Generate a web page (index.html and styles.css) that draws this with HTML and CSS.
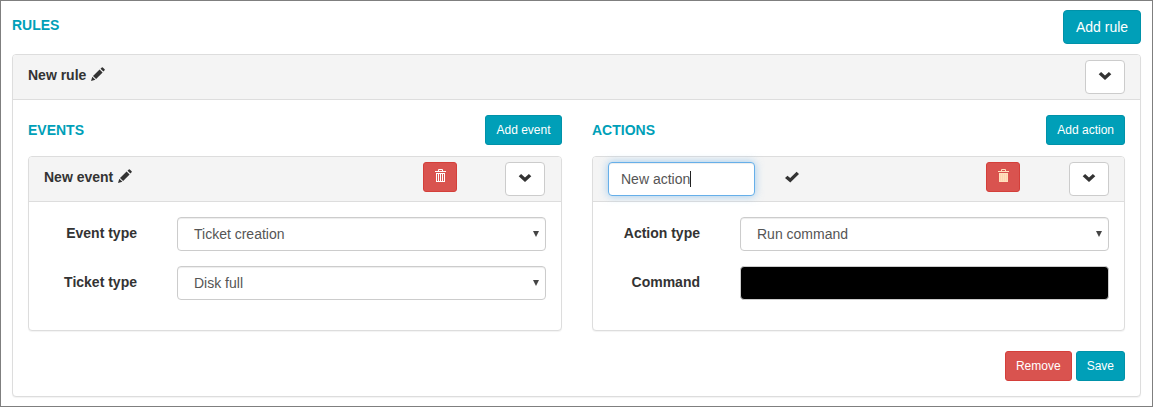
FILE: index.html
```
<!DOCTYPE html>
<html lang="en">
<head>
<meta charset="utf-8">
<title>Rules</title>
<link rel="stylesheet" href="styles.css">
</head>
<body>
<svg class="defs" width="0" height="0">
  <symbol id="pencil" viewBox="0 0 14 14"><path d="M0 14 1.3 9.7 4.4 12.7ZM2 9 8.6 2.6 11.6 5.4 5.1 12ZM9.5 1.8 10.8.5Q11.3 0 11.8.5L13.6 2.3Q14.1 2.8 13.6 3.3L12.4 4.6Z"/></symbol>
  <symbol id="chevron" viewBox="0 0 14 9"><path d="M.7 3.3 3.1.9 7 4.5 10.9.9 13.3 3.3 7 9Z"/></symbol>
  <symbol id="check" viewBox="0 0 14 12"><path d="M0 7.1 2.5 4.7 5.2 7.1 11.6.7 14 2.9 5.3 11.6Z"/></symbol>
  <symbol id="trash" viewBox="0 0 12 14"><path fill-rule="evenodd" d="M0 2H3V1Q3 0 4 0H7Q8 0 8 1V2H11V3H0ZM4 1V2H7V1ZM1 4H10V13H1ZM2 5V12H3V5ZM4 5V12H5V5ZM6 5V12H7V5ZM8 5V12H9V5Z"/></symbol>
</svg>
<main class="page">
  <header class="bar bar-page">
    <h1 class="title">RULES</h1>
    <button class="btn btn-primary btn-large">Add rule</button>
  </header>
  <section class="panel rule">
    <div class="panel-head">
      <span class="name">New rule <svg class="pencil"><use href="#pencil"/></svg></span>
      <button class="btn btn-toggle"><svg class="chevron"><use href="#chevron"/></svg></button>
    </div>
    <div class="rule-body">
      <div class="columns">
        <section class="events">
          <div class="bar">
            <h2 class="title">EVENTS</h2>
            <button class="btn btn-primary btn-event">Add event</button>
          </div>
          <div class="panel card">
            <div class="panel-head">
              <span class="name">New event <svg class="pencil"><use href="#pencil"/></svg></span>
              <button class="btn btn-danger btn-icon"><svg class="trash"><use href="#trash"/></svg></button>
              <button class="btn btn-toggle"><svg class="chevron"><use href="#chevron"/></svg></button>
            </div>
            <div class="form">
              <span class="label">Event type</span>
              <div class="control">Ticket creation<i class="arrow"></i></div>
              <span class="label">Ticket type</span>
              <div class="control">Disk full<i class="arrow"></i></div>
            </div>
          </div>
        </section>
        <section>
          <div class="bar">
            <h2 class="title">ACTIONS</h2>
            <button class="btn btn-primary">Add action</button>
          </div>
          <div class="panel card">
            <div class="panel-head">
              <div class="name-input">New action<i class="caret"></i></div>
              <svg class="check"><use href="#check"/></svg>
              <button class="btn btn-danger btn-icon"><svg class="trash trash-pale"><use href="#trash"/></svg></button>
              <button class="btn btn-toggle"><svg class="chevron"><use href="#chevron"/></svg></button>
            </div>
            <div class="form">
              <span class="label">Action type</span>
              <div class="control">Run command<i class="arrow"></i></div>
              <span class="label">Command</span>
              <div class="control control-masked"></div>
            </div>
          </div>
        </section>
      </div>
      <div class="footer">
        <button class="btn btn-danger">Remove</button>
        <button class="btn btn-primary">Save</button>
      </div>
    </div>
  </section>
</main>
</body>
</html>
```
FILE: styles.css
```
* { box-sizing: border-box; }
body { margin: 0; }
.defs { display: block; }
svg { fill: currentColor; flex: none; }

.page {
  height: 407px;
  border: 1px solid #7f7f7f;
  padding: 9px 11px 0;
  background: #fff;
  color: #333;
  font: 14px/20px "Liberation Sans", Arial, sans-serif;
  overflow: hidden;
}

.bar { display: flex; justify-content: space-between; height: 30px; }
.bar-page { height: 34px; }
.title {
  margin: 5px 0 0;
  color: #009fb8;
  font-size: 14px;
  line-height: 20px;
  font-weight: bold;
}

.panel {
  border: 1px solid #ddd;
  border-radius: 4px;
  background: #fff;
  box-shadow: 0 1px 1px rgba(0, 0, 0, .05);
}
.panel-head {
  display: flex;
  align-items: flex-start;
  height: 45px;
  padding: 5px 15px 0;
  border-bottom: 1px solid #ddd;
  border-radius: 3px 3px 0 0;
  background: #f4f4f4;
}
.events .panel-head { padding-right: 16px; }
.name { margin: 5px auto 0 0; font-weight: bold; white-space: nowrap; }
.pencil { width: 14px; height: 14px; margin-left: .5px; vertical-align: -1px; }

.rule { height: 343px; margin-top: 10px; }
.rule-body { padding: 15px 15px 0; }
.columns { display: grid; grid-template-columns: 534px 533px; gap: 30px; }
.card { height: 175px; margin-top: 11px; }

.btn {
  display: block;
  height: 30px;
  padding: 0 10px;
  border: 1px solid;
  border-radius: 3px;
  font: 12px/18px "Liberation Sans", Arial, sans-serif;
  white-space: nowrap;
}
.btn-primary { background: #009fb8; border-color: #0092a9; color: #fff; }
.btn-large { width: 78px; height: 34px; padding: 0; border-radius: 4px; font-size: 14px; }
.btn-event { width: 77px; padding: 0; }
.btn-danger { background: #d9534f; border-color: #d43f3a; color: #fff; }
.btn-icon { width: 34px; margin-right: 49px; }
.events .btn-icon { margin-right: 48px; }
.btn-toggle {
  width: 40px;
  height: 34px;
  padding: 0;
  border-color: #ccc;
  border-radius: 4px;
  background: #fff;
  color: #333;
}
.chevron { display: block; width: 14px; height: 9px; margin: -4px auto 0; }
.trash { display: block; width: 12px; height: 14px; margin: -2px 0 0 1px; }
.trash-pale { color: #ffe0bd; background: linear-gradient(#ffd5b0, #ffd5b0) 1px 4px / 9px 9px no-repeat; }
.check { width: 14px; height: 12px; margin: 9px auto 0 30px; }

.name-input {
  display: flex;
  align-items: center;
  width: 147px;
  height: 34px;
  padding-left: 12px;
  border: 1px solid #66afe9;
  border-radius: 4px;
  background: #fff;
  box-shadow: inset 0 1px 1px rgba(0, 0, 0, .075), 0 0 8px rgba(102, 175, 233, .6);
  color: #555;
}
.caret { width: 1px; height: 16px; background: #222; }

.form {
  display: grid;
  grid-template-columns: 93px 369px;
  column-gap: 40px;
  row-gap: 15px;
  justify-content: end;
  padding: 15px 15px 0 0;
}
.label { padding-top: 6px; text-align: right; font-weight: bold; }
.control {
  display: flex;
  align-items: center;
  justify-content: space-between;
  height: 34px;
  padding: 0 6px 0 16px;
  border: 1px solid #ccc;
  border-radius: 4px;
  background: #fff;
  box-shadow: inset 0 1px 1px rgba(0, 0, 0, .075);
  color: #555;
}
.control-masked { background: #000; }
.arrow { border: 3px solid transparent; border-top: 6px solid #444; border-bottom: 0; }

.footer { display: flex; justify-content: flex-end; gap: 4px; margin-top: 20px; }
```
